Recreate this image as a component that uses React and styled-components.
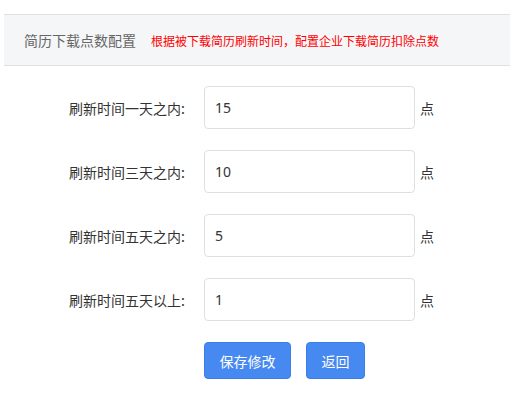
import React, { useState } from "react";
import styled, { createGlobalStyle } from "styled-components";

const GlobalStyle = createGlobalStyle`
  body {
    margin: 0;
    background: #fff;
    font-family: "Microsoft YaHei", "Noto Sans CJK SC", sans-serif;
  }
`;

const rows = [
  { label: "刷新时间一天之内:", value: "15" },
  { label: "刷新时间三天之内:", value: "10" },
  { label: "刷新时间五天之内:", value: "5" },
  { label: "刷新时间五天以上:", value: "1" },
];

const App = () => {
  const [values, setValues] = useState(rows.map((r) => r.value));

  return (
    <Page>
      <GlobalStyle />
      <Header>
        <Title>简历下载点数配置</Title>
        <Hint>根据被下载简历刷新时间，配置企业下载简历扣除点数</Hint>
      </Header>
      <Form onSubmit={(e) => e.preventDefault()}>
        {rows.map((row, index) => (
          <Row key={index}>
            <Label>{row.label}</Label>
            <Input
              type="text"
              value={values[index]}
              onChange={(e) => {
                const next = [...values];
                next[index] = e.target.value;
                setValues(next);
              }}
            />
            <Unit>点</Unit>
          </Row>
        ))}
        <Actions>
          <Button type="submit" $width={87}>
            保存修改
          </Button>
          <Button type="button" $width={59}>
            返回
          </Button>
        </Actions>
      </Form>
    </Page>
  );
};

const Page = styled.div`
  padding: 14px 0 0 4px;
`;

const Header = styled.div`
  display: flex;
  align-items: center;
  height: 50px;
  padding-left: 20px;
  background-color: #f5f6f8;
  border-top: 1px solid #e0e0e0;
  border-bottom: 1px solid #e0e0e0;
`;

const Title = styled.span`
  font-size: 14px;
  color: #666;
  margin-right: 15px;
`;

const Hint = styled.span`
  font-size: 12px;
  color: #ff0000;
`;

const Form = styled.form`
  display: flex;
  flex-direction: column;
  gap: 21px;
  padding-top: 20px;
`;

const Row = styled.div`
  display: flex;
  align-items: center;
`;

const Label = styled.label`
  width: 181px;
  margin-right: 19px;
  text-align: right;
  font-size: 14px;
  color: #333;
`;

const Input = styled.input`
  box-sizing: border-box;
  width: 211px;
  height: 43px;
  padding: 0 10px;
  border: 1px solid #dcdfe6;
  border-radius: 4px;
  font-family: "Noto Sans", "Noto Sans CJK SC", sans-serif;
  font-size: 14px;
  color: #333;
  outline: none;
`;

const Unit = styled.span`
  margin-left: 5px;
  font-size: 14px;
  color: #333;
`;

const Actions = styled.div`
  display: flex;
  gap: 15px;
  padding-left: 200px;
`;

const Button = styled.button`
  box-sizing: border-box;
  width: ${(p) => p.$width}px;
  height: 37px;
  border: 1px solid #3a7ee8;
  border-radius: 4px;
  background-color: #4689f1;
  color: #fff;
  font-family: "Microsoft YaHei", "Noto Sans CJK SC", sans-serif;
  font-size: 14px;
  cursor: pointer;
`;

export default App;
